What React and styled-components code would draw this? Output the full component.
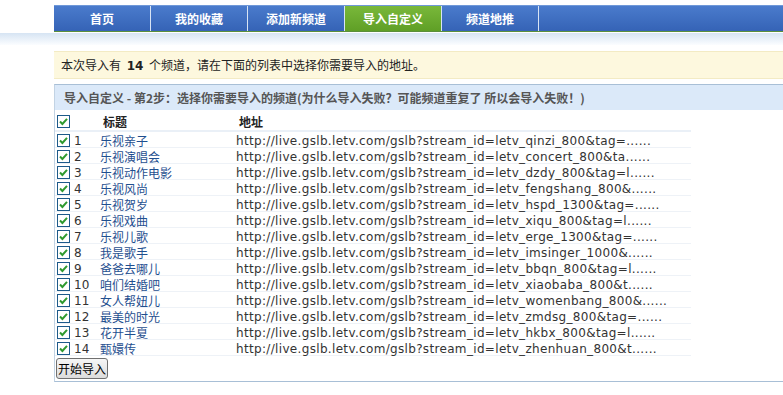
import React from "react";
import styled, { createGlobalStyle } from "styled-components";

const GlobalStyle = createGlobalStyle`
  body {
    margin: 0;
    background: #fff;
    font-family: "DejaVu Sans", "Noto Sans CJK SC", sans-serif;
    font-size: 12px;
  }
`;

const tabs = ["首页", "我的收藏", "添加新频道", "导入自定义", "频道地推"];

const channels = [
  ["乐视亲子", "letv_qinzi_800&tag=......"],
  ["乐视演唱会", "letv_concert_800&ta......"],
  ["乐视动作电影", "letv_dzdy_800&tag=l......"],
  ["乐视风尚", "letv_fengshang_800&......"],
  ["乐视贺岁", "letv_hspd_1300&tag=......"],
  ["乐视戏曲", "letv_xiqu_800&tag=l......"],
  ["乐视儿歌", "letv_erge_1300&tag=......"],
  ["我是歌手", "letv_imsinger_1000&......"],
  ["爸爸去哪儿", "letv_bbqn_800&tag=l......"],
  ["咱们结婚吧", "letv_xiaobaba_800&t......"],
  ["女人帮妞儿", "letv_womenbang_800&......"],
  ["最美的时光", "letv_zmdsg_800&tag=......"],
  ["花开半夏", "letv_hkbx_800&tag=l......"],
  ["甄嬛传", "letv_zhenhuan_800&t......"],
];

function Check() {
  return (
    <CheckBox viewBox="0 0 13 13" width="13" height="13">
      <rect x="0.5" y="0.5" width="12" height="12" fill="#fff" stroke="#1d5a8a" />
      <path d="M3 6.5 L5.4 9 L10 3.8" fill="none" stroke="#2f9a2f" strokeWidth="2" />
    </CheckBox>
  );
}

export default function App() {
  return (
    <>
      <GlobalStyle />
      <Nav>
        {tabs.map((t) => (
          <Tab key={t} $active={t === "导入自定义"}>{t}</Tab>
        ))}
        <NavFill />
      </Nav>
      <Band />
      <Content>
        <Notice>
          本次导入有 <b>14</b> 个频道，请在下面的列表中选择你需要导入的地址。
        </Notice>
        <Panel>
          <PanelHead>
            导入自定义 - 第2步：选择你需要导入的频道(为什么导入失败？可能频道重复了 所以会导入失败！)
          </PanelHead>
          <Table>
            <HeadRow>
              <Cell><Check /></Cell>
              <Cell $bold>标题</Cell>
              <Cell $bold>地址</Cell>
            </HeadRow>
            {channels.map(([name, id], i) => (
              <Row key={id}>
                <Cell>
                  <Check />
                  <Num>{i + 1}</Num>
                </Cell>
                <Title>{name}</Title>
                <Url>http://live.gslb.letv.com/gslb?stream_id={id}</Url>
              </Row>
            ))}
          </Table>
          <Submit>开始导入</Submit>
        </Panel>
      </Content>
    </>
  );
}

const Nav = styled.div`
  display: flex;
  margin: 5px 0 0 54px;
  height: 25px;
  border-top: 1px solid #6f98d8;
  border-bottom: 1px solid #5a8f3c;
  background: linear-gradient(#4a7bcc, #3563b6);
`;

const Tab = styled.div`
  width: 96px;
  border-right: 1px solid #d8e4f4;
  display: flex;
  align-items: center;
  justify-content: center;
  color: #fff;
  font-weight: bold;
  font-family: "Noto Sans CJK SC", sans-serif;
  font-size: 12px;
  background: ${(p) => (p.$active ? "linear-gradient(#79b83a, #5f9f26)" : "transparent")};
`;

const NavFill = styled.div`
  flex: 1;
`;

const Band = styled.div`
  height: 12px;
  margin-top: 1px;
  background: linear-gradient(#d6e4f3, #fbfdff);
`;

const Content = styled.div`
  padding-left: 54px;
`;

const Notice = styled.div`
  margin-top: 6px;
  height: 26px;
  line-height: 26px;
  padding-left: 7px;
  background: #fdf8de;
  border-top: 1px solid #f3ebc4;
  border-bottom: 1px solid #f3ebc4;
  color: #222;
  font-family: "Noto Sans CJK SC", sans-serif;
  font-size: 12px;

  b {
    font-family: "DejaVu Sans", sans-serif;
    font-size: 12px;
    margin: 0 3px;
  }
`;

const Panel = styled.div`
  margin-top: 5px;
  border-top: 1px solid #a8bfd6;
  border-left: 1px solid #c2d3e4;
  border-bottom: 1px solid #a8bfd6;
  padding-bottom: 2px;
`;

const PanelHead = styled.div`
  height: 25px;
  line-height: 25px;
  padding-left: 9px;
  background: #dbe9f9;
  color: #555;
  font-weight: bold;
  font-family: "Noto Sans CJK SC", sans-serif;
  font-size: 12px;
`;

const Table = styled.div`
  width: 636px;
  margin-top: 3px;
`;

const Row = styled.div`
  display: grid;
  grid-template-columns: 45px 136px 1fr;
  height: 16px;
  align-items: center;
  border-bottom: 1px solid #eef2f7;
  box-sizing: border-box;
`;

const HeadRow = styled(Row)`
  height: 19px;
  border-bottom: 2px solid #eaf0f7;
`;

const Cell = styled.div`
  display: flex;
  align-items: center;
  font-weight: ${(p) => (p.$bold ? "bold" : "normal")};
  font-family: "Noto Sans CJK SC", sans-serif;
  color: #222;
  padding-left: ${(p) => (p.$bold ? "3px" : "0")};
`;

const CheckBox = styled.svg`
  display: block;
  margin-left: 2px;
  flex: none;
`;

const Num = styled.span`
  margin-left: 4px;
  font-family: "DejaVu Sans", sans-serif;
  font-size: 12px;
  color: #333;
`;

const Title = styled.div`
  color: #1f4f8f;
  font-family: "Noto Sans CJK SC", sans-serif;
  font-size: 12px;
`;

const Url = styled.div`
  color: #333;
  font-family: "DejaVu Sans", sans-serif;
  font-size: 12px;
  letter-spacing: 0.33px;
  white-space: nowrap;
`;

const Submit = styled.button`
  display: block;
  margin: 2px 0 0 1px;
  height: 21px;
  padding: 0 1px;
  border: 1px solid #707070;
  border-radius: 3px;
  background: linear-gradient(#f6f6f6, #dcdcdc);
  font-family: "Noto Sans CJK SC", sans-serif;
  font-size: 12px;
  color: #000;
`;
